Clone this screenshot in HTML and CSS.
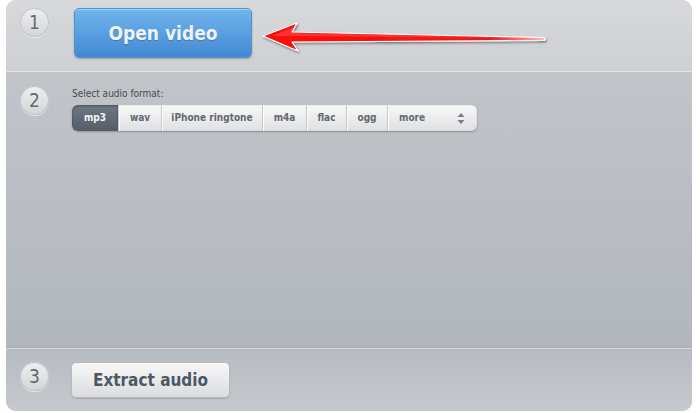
FILE: index.html
```html
<!DOCTYPE html>
<html>
<head>
<meta charset="utf-8">
<link rel="stylesheet" href="styles.css">
</head>
<body>
<div class="panel">
  <section class="step step-open">
    <div class="num">1</div>
    <button class="btn-open">Open video</button>
    <svg class="arrow" width="290" height="40" viewBox="0 0 290 40">
      <defs>
        <linearGradient id="ag" x1="0" y1="0" x2="1" y2="0">
          <stop offset="0" stop-color="#ff0a0a"/>
          <stop offset="0.8" stop-color="#f01818"/>
          <stop offset="1" stop-color="#f6c0c0"/>
        </linearGradient>
        <filter id="sh" x="-10%" y="-40%" width="120%" height="180%">
          <feDropShadow dx="1" dy="1.5" stdDeviation="1.2" flood-color="#000" flood-opacity="0.45"/>
        </filter>
      </defs>
      <path d="M3 18 L37 5 L32 14 L284 19.5 Q287 21 284 22.5 L32 24 L38 33 Z" fill="url(#ag)" stroke="#fff" stroke-width="1.2" stroke-linejoin="round" filter="url(#sh)"/>
      <path d="M12 18 L34 9 L31 15 L270 20 L31 18 Z" fill="#ff5a5a" opacity="0.5"/>
    </svg>
  </section>
  <section class="step step-format">
    <div class="num">2</div>
    <div class="format">
      <div class="label">Select audio format:</div>
      <div class="seg">
        <span class="opt sel w-mp3">mp3</span>
        <span class="opt w-wav">wav</span>
        <span class="opt w-iph">iPhone ringtone</span>
        <span class="opt w-m4a">m4a</span>
        <span class="opt w-flac">flac</span>
        <span class="opt w-ogg">ogg</span>
        <span class="opt more w-more">more<svg class="updown" width="8" height="11" viewBox="0 0 8 11"><path d="M4 0 L7.5 4 L0.5 4 Z M4 11 L7.5 7 L0.5 7 Z" fill="#7a7d82"/></svg></span>
      </div>
    </div>
  </section>
  <section class="step step-extract">
    <div class="num">3</div>
    <button class="btn-extract">Extract audio</button>
  </section>
</div>
</body>
</html>
```
FILE: styles.css
```css
html, body {
  margin: 0;
  padding: 0;
  background: #ffffff;
}
body {
  width: 700px;
  height: 413px;
  overflow: hidden;
  font-family: "DejaVu Sans Condensed", "DejaVu Sans", sans-serif;
}
.panel {
  margin-left: 6px;
  width: 686px;
  height: 411px;
  border-radius: 10px;
  overflow: hidden;
  display: flex;
  flex-direction: column;
  background: #c0c4c9;
}
.step {
  display: flex;
  position: relative;
}
.step-open {
  height: 72px;
  background: linear-gradient(#d8d9db, #cdcfd2);
  border-bottom: 1px solid #e3e4e6;
  align-items: flex-start;
  padding: 8px 0 0 14px;
  box-sizing: border-box;
}
.step-format {
  flex: 1;
  background: linear-gradient(#c1c4c9, #b2b7be);
  border-bottom: 1px solid #b0b4ba;
  padding: 14px 0 0 14px;
  box-shadow: inset 0 -1px 0 #acb1b7;
}
.step-extract {
  height: 63px;
  box-sizing: border-box;
  border-top: 1px solid #d2d5d9;
  background: linear-gradient(#b7bcc3, #c5c8cc);
  padding: 13px 0 0 14px;
  align-items: flex-start;
}
.num {
  width: 29px;
  height: 29px;
  flex: none;
  border-radius: 50%;
  box-sizing: border-box;
  background: linear-gradient(#eeeff0, #d3d5d8);
  box-shadow: inset 0 0 0 1px #c0c3c7, 0 1px 0 rgba(255,255,255,0.6);
  color: #66696e;
  font-family: "DejaVu Sans Condensed", "DejaVu Sans", sans-serif;
  font-size: 19px;
  line-height: 29px;
  text-align: center;
}
.btn-open {
  margin-left: 25px;
  width: 178px;
  height: 50px;
  border: 1px solid #4f92d8;
  border-radius: 5px;
  background: linear-gradient(#70b5ec, #5a9fe0 50%, #4488d3);
  box-shadow: 0 1px 2px rgba(0,0,0,0.25), inset 0 1px 0 rgba(255,255,255,0.35);
  color: #eef3f9;
  font-family: "DejaVu Sans Condensed", "DejaVu Sans", sans-serif;
  font-weight: bold;
  font-size: 19px;
  text-shadow: 0 1px 1px rgba(0,0,0,0.2);
  padding: 0;
}
.arrow {
  margin-left: 8px;
  margin-top: 10px;
  flex: none;
}
.format {
  margin-left: 23px;
  margin-top: 2px;
}
.label {
  font-size: 10px;
  color: #4a4c50;
  height: 17px;
  line-height: 12px;
}
.seg {
  display: flex;
  height: 26px;
  border-radius: 6px;
  background: linear-gradient(#f8f8f9, #dfe0e2);
  box-shadow: 0 1px 2px rgba(0,0,0,0.25), inset 0 0 0 1px rgba(0,0,0,0.04);
}
.opt {
  box-sizing: border-box;
  height: 26px;
  line-height: 26px;
  text-align: center;
  font-size: 10px;
  font-weight: bold;
  color: #646870;
  border-left: 1px solid #c7c9cc;
  box-shadow: inset 1px 0 0 #fbfbfb;
}
.opt.sel {
  border-left: none;
  box-shadow: inset 0 1px 2px rgba(0,0,0,0.35);
  border-radius: 6px 0 0 6px;
  background: linear-gradient(#6e7681, #555d69);
  color: #f3f4f6;
}
.w-mp3 { width: 46px; }
.w-wav { width: 43px; }
.w-iph { width: 101px; }
.w-m4a { width: 44px; }
.w-flac { width: 40px; }
.w-ogg { width: 41px; }
.w-more {
  width: 90px;
  text-align: left;
  padding-left: 11px;
  display: flex;
  align-items: center;
  justify-content: space-between;
  padding-right: 12px;
}
.updown { flex: none; }
.btn-extract {
  margin-left: 22px;
  width: 159px;
  height: 36px;
  border: 1px solid #b7bac0;
  border-radius: 5px;
  background: linear-gradient(#f7f7f8, #e9eaec 50%, #dbdcdf);
  box-shadow: 0 1px 1px rgba(0,0,0,0.15);
  color: #4f5765;
  font-family: "DejaVu Sans Condensed", "DejaVu Sans", sans-serif;
  font-weight: bold;
  font-size: 17px;
  padding: 0;
}
```
